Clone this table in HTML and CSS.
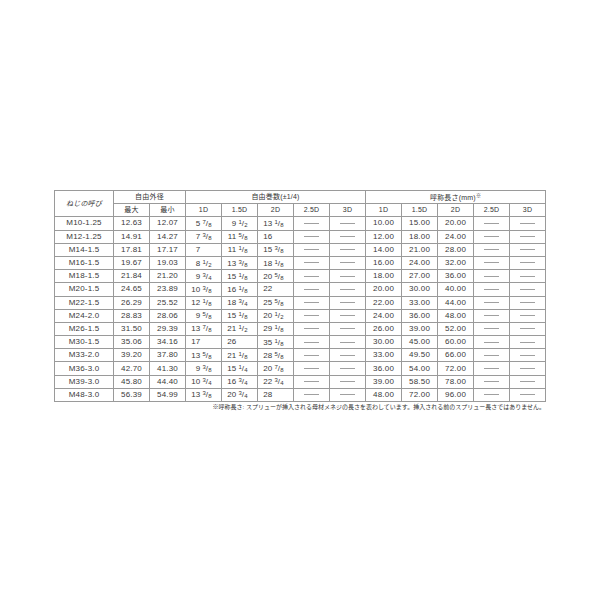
FILE: index.html
```html
<!DOCTYPE html>
<html lang="ja">
<head>
<meta charset="utf-8">
<title>スプリュー寸法表</title>
<link rel="stylesheet" href="styles.css">
</head>
<body>
<div class="wrap">
<table class="spec">
<colgroup>
<col class="c0"><col><col><col><col><col><col><col><col><col><col><col><col>
</colgroup>
<thead>
<tr><th rowspan="2" class="nm">ねじの呼び</th><th colspan="2">自由外径</th><th colspan="5">自由巻数(±1/4)</th><th colspan="5">呼称長さ(mm)<span class="kome">※</span></th></tr>
<tr><th>最大</th><th>最小</th><th>1D</th><th>1.5D</th><th>2D</th><th>2.5D</th><th>3D</th><th>1D</th><th>1.5D</th><th>2D</th><th>2.5D</th><th>3D</th></tr>
</thead>
<tbody>
<tr><td>M10-1.25</td><td>12.63</td><td>12.07</td><td class="fr"><span class="i">5</span><span class="n">7</span>/<span class="d">8</span></td><td class="fr"><span class="i">9</span><span class="n">1</span>/<span class="d">2</span></td><td class="fr"><span class="i">13</span><span class="n">1</span>/<span class="d">8</span></td><td><span class="dash"></span></td><td><span class="dash"></span></td><td>10.00</td><td>15.00</td><td>20.00</td><td><span class="dash"></span></td><td><span class="dash"></span></td></tr>
<tr><td>M12-1.25</td><td>14.91</td><td>14.27</td><td class="fr"><span class="i">7</span><span class="n">3</span>/<span class="d">8</span></td><td class="fr"><span class="i">11</span><span class="n">5</span>/<span class="d">8</span></td><td class="fr"><span class="i">16</span></td><td><span class="dash"></span></td><td><span class="dash"></span></td><td>12.00</td><td>18.00</td><td>24.00</td><td><span class="dash"></span></td><td><span class="dash"></span></td></tr>
<tr><td>M14-1.5</td><td>17.81</td><td>17.17</td><td class="fr"><span class="i">7</span></td><td class="fr"><span class="i">11</span><span class="n">1</span>/<span class="d">8</span></td><td class="fr"><span class="i">15</span><span class="n">3</span>/<span class="d">8</span></td><td><span class="dash"></span></td><td><span class="dash"></span></td><td>14.00</td><td>21.00</td><td>28.00</td><td><span class="dash"></span></td><td><span class="dash"></span></td></tr>
<tr><td>M16-1.5</td><td>19.67</td><td>19.03</td><td class="fr"><span class="i">8</span><span class="n">1</span>/<span class="d">2</span></td><td class="fr"><span class="i">13</span><span class="n">3</span>/<span class="d">8</span></td><td class="fr"><span class="i">18</span><span class="n">1</span>/<span class="d">8</span></td><td><span class="dash"></span></td><td><span class="dash"></span></td><td>16.00</td><td>24.00</td><td>32.00</td><td><span class="dash"></span></td><td><span class="dash"></span></td></tr>
<tr><td>M18-1.5</td><td>21.84</td><td>21.20</td><td class="fr"><span class="i">9</span><span class="n">3</span>/<span class="d">4</span></td><td class="fr"><span class="i">15</span><span class="n">1</span>/<span class="d">8</span></td><td class="fr"><span class="i">20</span><span class="n">5</span>/<span class="d">8</span></td><td><span class="dash"></span></td><td><span class="dash"></span></td><td>18.00</td><td>27.00</td><td>36.00</td><td><span class="dash"></span></td><td><span class="dash"></span></td></tr>
<tr><td>M20-1.5</td><td>24.65</td><td>23.89</td><td class="fr"><span class="i">10</span><span class="n">3</span>/<span class="d">8</span></td><td class="fr"><span class="i">16</span><span class="n">1</span>/<span class="d">8</span></td><td class="fr"><span class="i">22</span></td><td><span class="dash"></span></td><td><span class="dash"></span></td><td>20.00</td><td>30.00</td><td>40.00</td><td><span class="dash"></span></td><td><span class="dash"></span></td></tr>
<tr><td>M22-1.5</td><td>26.29</td><td>25.52</td><td class="fr"><span class="i">12</span><span class="n">1</span>/<span class="d">8</span></td><td class="fr"><span class="i">18</span><span class="n">3</span>/<span class="d">4</span></td><td class="fr"><span class="i">25</span><span class="n">5</span>/<span class="d">8</span></td><td><span class="dash"></span></td><td><span class="dash"></span></td><td>22.00</td><td>33.00</td><td>44.00</td><td><span class="dash"></span></td><td><span class="dash"></span></td></tr>
<tr><td>M24-2.0</td><td>28.83</td><td>28.06</td><td class="fr"><span class="i">9</span><span class="n">5</span>/<span class="d">8</span></td><td class="fr"><span class="i">15</span><span class="n">1</span>/<span class="d">8</span></td><td class="fr"><span class="i">20</span><span class="n">1</span>/<span class="d">2</span></td><td><span class="dash"></span></td><td><span class="dash"></span></td><td>24.00</td><td>36.00</td><td>48.00</td><td><span class="dash"></span></td><td><span class="dash"></span></td></tr>
<tr><td>M26-1.5</td><td>31.50</td><td>29.39</td><td class="fr"><span class="i">13</span><span class="n">7</span>/<span class="d">8</span></td><td class="fr"><span class="i">21</span><span class="n">1</span>/<span class="d">2</span></td><td class="fr"><span class="i">29</span><span class="n">1</span>/<span class="d">8</span></td><td><span class="dash"></span></td><td><span class="dash"></span></td><td>26.00</td><td>39.00</td><td>52.00</td><td><span class="dash"></span></td><td><span class="dash"></span></td></tr>
<tr><td>M30-1.5</td><td>35.06</td><td>34.16</td><td class="fr"><span class="i">17</span></td><td class="fr"><span class="i">26</span></td><td class="fr"><span class="i">35</span><span class="n">1</span>/<span class="d">8</span></td><td><span class="dash"></span></td><td><span class="dash"></span></td><td>30.00</td><td>45.00</td><td>60.00</td><td><span class="dash"></span></td><td><span class="dash"></span></td></tr>
<tr><td>M33-2.0</td><td>39.20</td><td>37.80</td><td class="fr"><span class="i">13</span><span class="n">5</span>/<span class="d">8</span></td><td class="fr"><span class="i">21</span><span class="n">1</span>/<span class="d">8</span></td><td class="fr"><span class="i">28</span><span class="n">5</span>/<span class="d">8</span></td><td><span class="dash"></span></td><td><span class="dash"></span></td><td>33.00</td><td>49.50</td><td>66.00</td><td><span class="dash"></span></td><td><span class="dash"></span></td></tr>
<tr><td>M36-3.0</td><td>42.70</td><td>41.30</td><td class="fr"><span class="i">9</span><span class="n">3</span>/<span class="d">8</span></td><td class="fr"><span class="i">15</span><span class="n">1</span>/<span class="d">4</span></td><td class="fr"><span class="i">20</span><span class="n">7</span>/<span class="d">8</span></td><td><span class="dash"></span></td><td><span class="dash"></span></td><td>36.00</td><td>54.00</td><td>72.00</td><td><span class="dash"></span></td><td><span class="dash"></span></td></tr>
<tr><td>M39-3.0</td><td>45.80</td><td>44.40</td><td class="fr"><span class="i">10</span><span class="n">3</span>/<span class="d">4</span></td><td class="fr"><span class="i">16</span><span class="n">3</span>/<span class="d">4</span></td><td class="fr"><span class="i">22</span><span class="n">3</span>/<span class="d">4</span></td><td><span class="dash"></span></td><td><span class="dash"></span></td><td>39.00</td><td>58.50</td><td>78.00</td><td><span class="dash"></span></td><td><span class="dash"></span></td></tr>
<tr><td>M48-3.0</td><td>56.39</td><td>54.99</td><td class="fr"><span class="i">13</span><span class="n">3</span>/<span class="d">8</span></td><td class="fr"><span class="i">20</span><span class="n">3</span>/<span class="d">4</span></td><td class="fr"><span class="i">28</span></td><td><span class="dash"></span></td><td><span class="dash"></span></td><td>48.00</td><td>72.00</td><td>96.00</td><td><span class="dash"></span></td><td><span class="dash"></span></td></tr>
</tbody>
</table>
<p class="note">※呼称長さ: スプリューが挿入される母材メネジの長さを表わしています。挿入される前のスプリュー長さではありません。</p>
</div>
</body>
</html>
```
FILE: styles.css
```css
html, body {
  margin: 0;
  padding: 0;
  background: #ffffff;
}
body {
  font-family: "Liberation Sans", "Noto Sans CJK JP", sans-serif;
  color: #3a3a3a;
}
.wrap {
  width: 491px;
  padding: 190px 0 0 54px;
}
.spec {
  width: 491px;
  border-collapse: collapse;
  table-layout: fixed;
  border: 1px solid #8a8a8a;
}
.spec col { width: 36px; }
.spec col.c0 { width: 59px; }
.spec th,
.spec td {
  border: 1px solid #9a9a9a;
  height: 12.2px;
  padding: 0;
  font-size: 8px;
  line-height: 8px;
  font-weight: normal;
  text-align: center;
  white-space: nowrap;
  overflow: hidden;
  letter-spacing: 0.2px;
}
.spec th {
  font-size: 7px;
  color: #333;
}
.spec th.nm {
  font-style: italic;
}
.kome {
  font-size: 5px;
  line-height: 1;
  vertical-align: 3px;
}
.spec td.fr {
  text-align: left;
  padding-left: 5px;
}
.i {
  display: inline-block;
  width: 9.5px;
  text-align: right;
  margin-right: 2px;
}
.n, .d {
  font-size: 6px;
  line-height: 1;
  letter-spacing: 0;
}
.n { vertical-align: 2px; }
.d { vertical-align: -0.5px; }
.dash {
  display: inline-block;
  width: 15px;
  height: 0;
  border-top: 1px solid #a0a0a0;
  vertical-align: middle;
}
.note {
  margin: 1px 0 0 0;
  font-size: 6px;
  line-height: 8px;
  text-align: right;
  color: #333;
  letter-spacing: 0;
}
```
